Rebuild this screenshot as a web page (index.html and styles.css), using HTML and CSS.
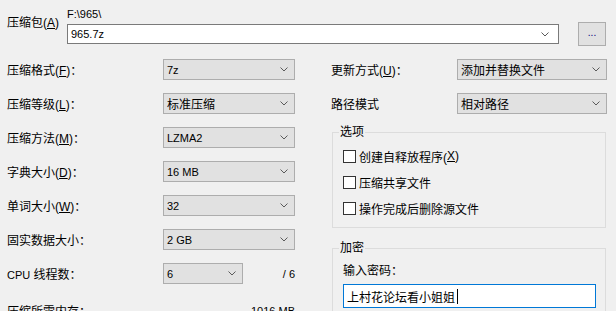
FILE: index.html
```html
<!DOCTYPE html>
<html>
<head>
    <title>添加到压缩包</title>
    <link rel="stylesheet" href="styles.css">
</head>
<body>
    <div class="dialog">
        <div class="archive">
            <label class="archive-label">压缩包(<u>A</u>)</label>
            <div class="archive-path">
                <div class="path-hint latin">F:\965\</div>
                <div class="path-row">
                    <div class="combo path-combo">
                        <span class="combo-text latin">965.7z</span>
                        <svg class="chevron" width="8" height="5" viewBox="0 0 8 5"><path d="M0.5 0.5 L4 4 L7.5 0.5" fill="none" stroke="#5a5a5a" stroke-width="1"/></svg>
                    </div>
                    <button class="browse">...</button>
                </div>
            </div>
        </div>

        <div class="main">
            <div class="left">
                <label>压缩格式(<u>F</u>)：</label>
                <div class="select"><span class="latin">7z</span><svg class="chevron" width="8" height="5" viewBox="0 0 8 5"><path d="M0.5 0.5 L4 4 L7.5 0.5" fill="none" stroke="#5a5a5a"/></svg></div>

                <label>压缩等级(<u>L</u>)：</label>
                <div class="select"><span>标准压缩</span><svg class="chevron" width="8" height="5" viewBox="0 0 8 5"><path d="M0.5 0.5 L4 4 L7.5 0.5" fill="none" stroke="#5a5a5a"/></svg></div>

                <label>压缩方法(<u>M</u>)：</label>
                <div class="select"><span class="latin">LZMA2</span><svg class="chevron" width="8" height="5" viewBox="0 0 8 5"><path d="M0.5 0.5 L4 4 L7.5 0.5" fill="none" stroke="#5a5a5a"/></svg></div>

                <label>字典大小(<u>D</u>)：</label>
                <div class="select"><span class="latin">16 MB</span><svg class="chevron" width="8" height="5" viewBox="0 0 8 5"><path d="M0.5 0.5 L4 4 L7.5 0.5" fill="none" stroke="#5a5a5a"/></svg></div>

                <label>单词大小(<u>W</u>)：</label>
                <div class="select"><span class="latin">32</span><svg class="chevron" width="8" height="5" viewBox="0 0 8 5"><path d="M0.5 0.5 L4 4 L7.5 0.5" fill="none" stroke="#5a5a5a"/></svg></div>

                <label>固实数据大小：</label>
                <div class="select"><span class="latin">2 GB</span><svg class="chevron" width="8" height="5" viewBox="0 0 8 5"><path d="M0.5 0.5 L4 4 L7.5 0.5" fill="none" stroke="#5a5a5a"/></svg></div>

                <label><span class="latin">CPU</span> 线程数：</label>
                <div class="cpu-cell">
                    <div class="select select-small"><span class="latin">6</span><svg class="chevron" width="8" height="5" viewBox="0 0 8 5"><path d="M0.5 0.5 L4 4 L7.5 0.5" fill="none" stroke="#5a5a5a"/></svg></div>
                    <span class="cpu-max latin">/ 6</span>
                </div>

                <label class="memory-label">压缩所需内存：</label>
                <div class="memory-value latin">1016 MB</div>
            </div>

            <div class="right">
                <div class="right-row">
                    <label>更新方式(<u>U</u>)：</label>
                    <div class="select select-wide"><span>添加并替换文件</span><svg class="chevron" width="8" height="5" viewBox="0 0 8 5"><path d="M0.5 0.5 L4 4 L7.5 0.5" fill="none" stroke="#5a5a5a"/></svg></div>
                </div>
                <div class="right-row">
                    <label>路径模式</label>
                    <div class="select select-wide"><span>相对路径</span><svg class="chevron" width="8" height="5" viewBox="0 0 8 5"><path d="M0.5 0.5 L4 4 L7.5 0.5" fill="none" stroke="#5a5a5a"/></svg></div>
                </div>

                <fieldset class="group options">
                    <legend>选项</legend>
                    <div class="check-row"><span class="checkbox"></span>创建自释放程序(<u>X</u>)</div>
                    <div class="check-row"><span class="checkbox"></span>压缩共享文件</div>
                    <div class="check-row"><span class="checkbox"></span>操作完成后删除源文件</div>
                </fieldset>

                <fieldset class="group encrypt">
                    <legend>加密</legend>
                    <div class="password-label">输入密码：</div>
                    <div class="password-box">上村花论坛看小姐姐<span class="caret"></span></div>
                </fieldset>
            </div>
        </div>
    </div>
</body>
</html>
```

FILE: styles.css
```css
html, body {
    margin: 0;
    padding: 0;
    height: 100%;
    overflow: hidden;
}
body {
    background-color: #f0f0f0;
    font-family: "Liberation Sans", "Noto Sans CJK SC", sans-serif;
    font-size: 12px;
    color: #000;
}
.latin {
    font-size: 11px;
}
u {
    text-decoration: underline;
}
.dialog {
    padding: 7px 9px 0 7px;
}
.archive {
    display: flex;
}
.archive-label {
    width: 60px;
    line-height: 15px;
    margin-top: 9px;
}
.path-hint {
    line-height: 15px;
    height: 15px;
}
.path-row {
    display: flex;
    align-items: center;
    height: 24px;
}
.combo {
    display: flex;
    align-items: center;
    box-sizing: border-box;
    height: 20px;
    border: 1px solid #7a7a7a;
    background-color: #fff;
    padding: 0 9px 0 3px;
}
.path-combo {
    width: 492px;
}
.combo-text, .select span {
    flex: 1;
    white-space: nowrap;
}
.browse {
    box-sizing: border-box;
    width: 28px;
    height: 24px;
    margin-left: 19px;
    padding: 0 0 4px 0;
    border: 1px solid #adadad;
    background-color: #e1e1e1;
    color: #000080;
    font-family: "Liberation Sans", sans-serif;
    font-size: 10px;
}
.main {
    display: flex;
    margin-top: 13px;
}
.left {
    display: grid;
    grid-template-columns: 156px 132px;
    grid-auto-rows: 21px;
    row-gap: 13px;
    width: 289px;
    align-items: center;
}
.select {
    display: flex;
    align-items: center;
    box-sizing: border-box;
    height: 21px;
    border: 1px solid #adadad;
    background-color: #e1e1e1;
    padding: 0 6px 0 3px;
}
.select-small {
    width: 80px;
}
.cpu-cell {
    display: flex;
    align-items: center;
}
.cpu-max {
    margin-left: auto;
}
.memory-label, .memory-value {
    position: relative;
    top: 3px;
}
.memory-value {
    text-align: right;
}
.right {
    margin-left: 35px;
    width: 276px;
}
.right-row {
    display: flex;
    align-items: center;
    height: 21px;
    margin-bottom: 13px;
}
.right-row label {
    width: 126px;
}
.select-wide {
    width: 150px;
}
.group {
    margin: 0 1px;
    border: 1px solid #dcdcdc;
    padding: 0 11px 10px 10px;
    min-width: 0;
}
.group legend {
    padding: 0 1px;
    margin-left: -4px;
    line-height: 15px;
}
.options {
    margin-top: -2px;
}
.check-row {
    display: flex;
    align-items: center;
    height: 18px;
    margin-top: 8px;
}
.check-row:first-of-type {
    margin-top: 7px;
}
.checkbox {
    box-sizing: border-box;
    width: 13px;
    height: 13px;
    border: 1px solid #333;
    background-color: #fff;
    margin-right: 3px;
}
.encrypt {
    margin-top: 13px;
}
.password-label {
    line-height: 15px;
    margin-top: 8px;
}
.password-box {
    display: flex;
    align-items: center;
    box-sizing: border-box;
    width: 253px;
    height: 24px;
    margin-top: 5px;
    border: 1px solid #0078d7;
    background-color: #fff;
    padding-left: 3px;
}
.caret {
    display: inline-block;
    width: 1px;
    height: 15px;
    margin-left: 2px;
    background-color: #000;
}
```
